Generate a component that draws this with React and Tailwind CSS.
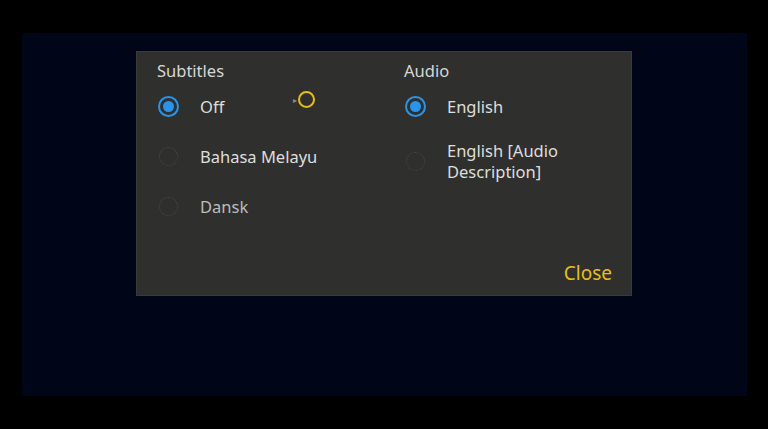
import React from 'react';

const subtitles = [
  { label: 'Off', selected: true },
  { label: 'Bahasa Melayu' },
  { label: 'Dansk', dim: true },
];

const audio = [
  { label: 'English', selected: true },
  { label: 'English [Audio Description]', tall: true },
];

function Radio({ selected }) {
  return (
    <span className="flex h-[21px] w-[21px] shrink-0 items-center justify-center">
      {selected ? (
        <span className="flex h-[21px] w-[21px] items-center justify-center rounded-full border-[2.5px] border-[#2a93ea]">
          <span className="h-[11px] w-[11px] rounded-full bg-[#2a93ea]" />
        </span>
      ) : (
        <span className="h-[19px] w-[19px] rounded-full border border-dotted border-[#4a4b48]" />
      )}
    </span>
  );
}

function Option({ label, selected, dim, tall }) {
  return (
    <div className={`flex items-center gap-[21px] pl-px ${tall ? 'h-[60px]' : 'h-[50px]'}`}>
      <Radio selected={selected} />
      <span className={`text-[16.5px] leading-[21px] ${dim ? 'text-[#bcbcbc]' : 'text-[#dedede]'} ${tall ? 'w-[130px]' : ''}`}>
        {label}
      </span>
    </div>
  );
}

export default function App() {
  return (
    <div className="h-[429px] w-[768px] bg-black pl-[22px] pt-[33px]" style={{ fontFamily: '"Noto Sans", "Open Sans", sans-serif' }}>
      <div className="h-[363px] w-[725px] bg-[#000518] pl-[114px] pt-[18px]">
        <div className="relative flex h-[245px] w-[496px] flex-col border border-[#3a3b38] bg-[#2f302d]">
          <div className="grid grid-cols-[247px_1fr] pl-[20px] pt-[8px]">
            <div>
              <div className="h-[21px] text-[16.5px] leading-[21px] text-[#d6d6d6]">Subtitles</div>
              {subtitles.map((o) => (
                <Option key={o.label} {...o} />
              ))}
            </div>
            <div>
              <div className="h-[21px] text-[16.5px] leading-[21px] text-[#d6d6d6]">Audio</div>
              {audio.map((o) => (
                <Option key={o.label} {...o} />
              ))}
            </div>
          </div>
          <div className="mt-auto flex justify-end pb-[10px] pr-[19px]">
            <span className="text-[19px] leading-[24px] text-[#e7be1c]">Close</span>
          </div>

          {/* pointer + focus ring */}
          <span className="absolute left-[156px] top-[44px] text-[8px] leading-none text-[#8a8a8a]">▸</span>
          <span className="absolute left-[161px] top-[39px] h-[17px] w-[17px] rounded-full border-[2.5px] border-[#e3bd1a]" />
        </div>
      </div>
    </div>
  );
}
